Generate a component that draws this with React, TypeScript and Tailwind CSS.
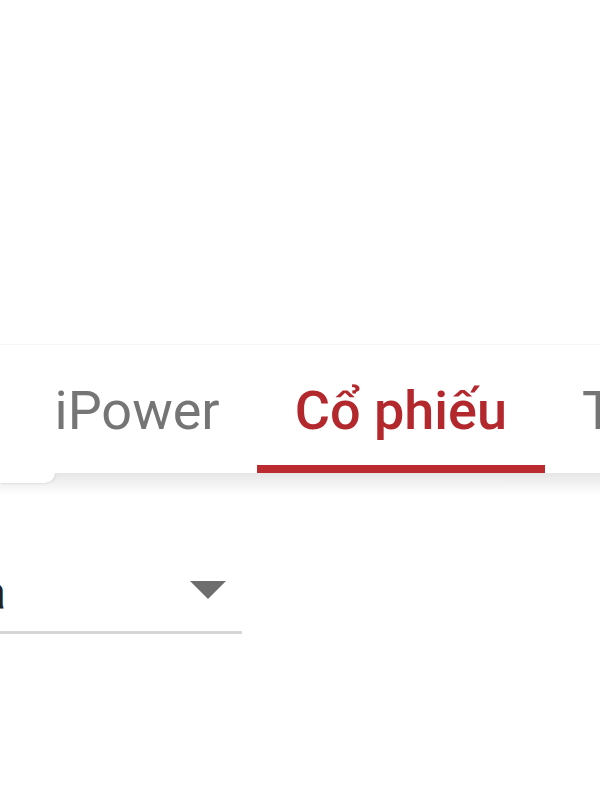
import React from "react";

const tabs = [
  { label: "iPower", active: false },
  { label: "Cổ phiếu", active: true },
  { label: "Thị trường", active: false },
];

export default function App() {
  return (
    <div
      className="w-[600px] h-[800px] overflow-hidden bg-white"
      style={{ fontFamily: "Roboto, 'Noto Sans', sans-serif" }}
    >
      <div className="h-[345px] border-b border-[#f6f6f6]" />

      {/* tab bar */}
      <div className="h-[128px] bg-white overflow-hidden">
        <div className="flex h-full pl-[17px] whitespace-nowrap">
          {tabs.map((t) => (
            <div
              key={t.label}
              className={
                t.active
                  ? "relative flex items-center px-[37.5px] pt-[2px] text-[54px] font-medium text-[#b3282d]"
                  : "relative flex items-center px-[37.5px] pt-[2px] text-[54px] text-[#757575]"
              }
            >
              {t.label}
              {t.active && (
                <div className="absolute left-0 right-0 bottom-0 h-[8px] bg-[#bb2a2f]" />
              )}
            </div>
          ))}
        </div>
      </div>

      {/* shadow under tabs */}
      <div className="relative h-[22px] bg-gradient-to-b from-[#e6e6e6] to-white">
        <div className="absolute left-0 top-0 w-[55px] h-[10px] bg-white rounded-br-[12px] shadow-[1px_1px_2px_rgba(0,0,0,0.08)]" />
      </div>

      {/* dropdown */}
      <div className="w-[242px] mt-[60px] h-[79px] flex items-center justify-between border-b-[3px] border-[#d6d6d6]">
        <span className="-ml-[20px] text-[48px] leading-none text-[#222]">a</span>
        <svg width="36" height="18" viewBox="0 0 36 18" className="mr-[16px] -mt-[6px]">
          <path d="M0 0 H36 L18 18 Z" fill="#6e6e6e" />
        </svg>
      </div>
    </div>
  );
}
